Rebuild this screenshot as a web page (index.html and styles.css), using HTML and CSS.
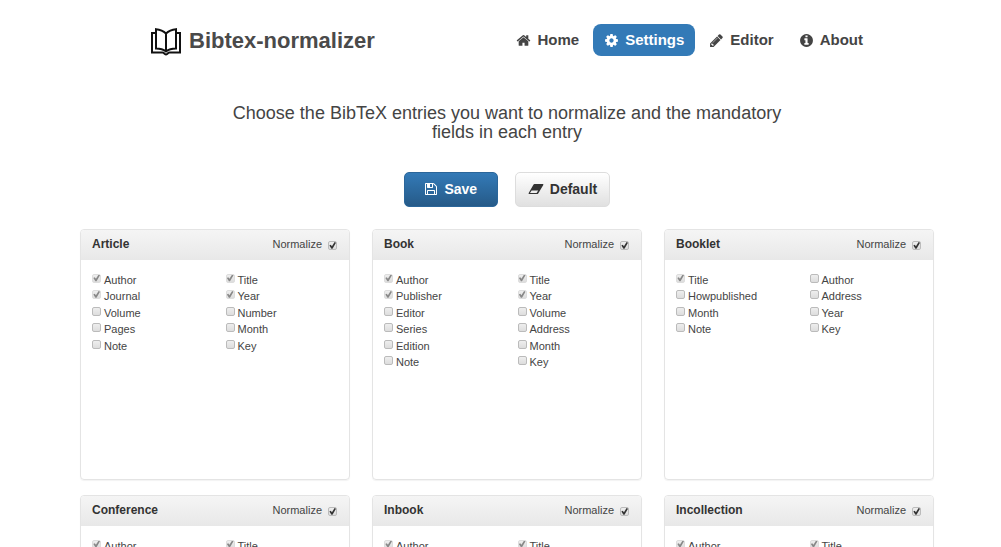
FILE: index.html
```
<!DOCTYPE html>
<html lang="en">
<head>
<meta charset="utf-8">
<title>Bibtex-normalizer</title>
<link rel="stylesheet" href="styles.css">
</head>
<body>
<div class="page">
<header class="header">
  <a class="brand" href="#">
    <svg class="brand-icon" viewBox="0 0 30 28" aria-hidden="true"><path d="M4.500 5H1v19.500h10.500c1.500 0 2.500 2 3.500 2s2-2 3.500-2H29V5h-3.500M15 5.500C12.500 3 8.500 1.500 5 1.200v19.300c4 0 7.500 1 10 3 2.500-2 6-3 10-3V1.200c-3.500.3-7.500 1.800-10 4.300zV23.500"/></svg>
    <span>Bibtex-normalizer</span>
  </a>
  <nav class="nav">
    <a class="nav-link" href="#"><svg class="icon" viewBox="0 0 1792 1792" aria-hidden="true"><path d="M1472 992v480q0 26-19 45t-45 19h-384v-384h-256v384h-384q-26 0-45-19t-19-45v-480q0-1 .5-3t.5-3l575-474 575 474q1 2 1 6zm223-69l-62 74q-8 9-21 11h-3q-13 0-21-7l-692-577-692 577q-12 8-24 7-13-2-21-11l-62-74q-8-10-7-23.500t11-21.500l719-599q32-26 76-26t76 26l244 204v-195q0-14 9-23t23-9h192q14 0 23 9t9 23v408l219 182q10 8 11 21.500t-7 23.500z"/></svg>Home</a>
    <a class="nav-link active" href="#"><svg class="icon" viewBox="0 0 1792 1792" aria-hidden="true"><path d="M1152 896q0-106-75-181t-181-75-181 75-75 181 75 181 181 75 181-75 75-181zm512-109v222q0 12-8 23t-20 13l-185 28q-19 54-39 91 35 50 107 138 10 12 10 25t-9 23q-27 37-99 108t-94 71q-12 0-26-9l-138-108q-44 23-91 38-16 136-29 186-7 28-36 28h-222q-14 0-24.500-8.500t-11.500-21.500l-28-184q-49-16-90-37l-141 107q-10 9-25 9-14 0-25-11-126-114-165-168-7-10-7-23 0-12 8-23 15-21 51-66.500t54-70.500q-27-50-41-99l-183-27q-13-2-21-12.500t-8-23.500v-222q0-12 8-23t19-13l186-28q14-46 39-92-40-57-107-138-10-12-10-24 0-10 9-23 26-36 98.500-107.500t94.500-71.500q13 0 26 10l138 107q44-23 91-38 16-136 29-186 7-28 36-28h222q14 0 24.500 8.500t11.500 21.500l28 184q49 16 90 37l142-107q9-9 24-9 13 0 25 10 129 119 165 170 7 8 7 22 0 12-8 23-15 21-51 66.500t-54 70.500q26 50 41 98l183 28q13 2 21 12.500t8 23.500z"/></svg>Settings</a>
    <a class="nav-link" href="#"><svg class="icon" viewBox="0 0 1792 1792" aria-hidden="true"><path d="M491 1536l91-91-235-235-91 91v107h128v128h107zm523-928q0-22-22-22-10 0-17 7l-542 542q-7 7-7 17 0 22 22 22 10 0 17-7l542-542q7-7 7-17zm-54-192l416 416-832 832h-416v-416zm683 96q0 53-37 90l-166 166-416-416 166-165q36-38 90-38 53 0 91 38l235 234q37 39 37 91z"/></svg>Editor</a>
    <a class="nav-link" href="#"><svg class="icon" viewBox="0 0 1792 1792" aria-hidden="true"><path d="M1152 1376v-160q0-14-9-23t-23-9h-96v-512q0-14-9-23t-23-9h-320q-14 0-23 9t-9 23v160q0 14 9 23t23 9h96v320h-96q-14 0-23 9t-9 23v160q0 14 9 23t23 9h448q14 0 23-9t9-23zm-128-896v-160q0-14-9-23t-23-9h-192q-14 0-23 9t-9 23v160q0 14 9 23t23 9h192q14 0 23-9t9-23zm640 416q0 209-103 385.500t-279.500 279.500-385.500 103-385.500-103-279.500-279.500-103-385.500 103-385.500 279.500-279.500 385.500-103 385.500 103 279.500 279.500 103 385.500z"/></svg>About</a>
  </nav>
</header>
<main>
  <p class="intro">Choose the BibTeX entries you want to normalize and the mandatory fields in each entry</p>
  <div class="actions">
    <button class="btn btn-primary" type="button"><svg class="btn-icon" viewBox="0 0 1792 1792" aria-hidden="true"><path d="M512 1536h768v-384h-768v384zm896 0h128v-896q0-14-10-38.500t-20-34.500l-281-281q-10-10-34-20t-39-10v416q0 40-28 68t-68 28h-576q-40 0-68-28t-28-68v-416h-128v1280h128v-416q0-40 28-68t68-28h832q40 0 68 28t28 68v416zm-384-928v-320q0-13-9.500-22.500t-22.500-9.500h-192q-13 0-22.500 9.500t-9.500 22.500v320q0 13 9.500 22.500t22.500 9.500h192q13 0 22.500-9.500t9.500-22.500zm640 32v928q0 40-28 68t-68 28h-1344q-40 0-68-28t-28-68v-1344q0-40 28-68t68-28h928q40 0 88 20t76 48l280 280q28 28 48 76t20 88z"/></svg>Save</button>
    <button class="btn" type="button"><svg class="btn-icon btn-icon-wide" viewBox="0 0 16 14" aria-hidden="true"><path fill-rule="evenodd" d="M6.500 2h8.300q.9 0 .5 1L10.200 11.400q-.4.600-1.200.600H1.100q-.9 0-.4-1L5.400 2.700q.4-.7 1.100-.7zM3.600 8.400L2 11h6.600l1.600-2.600z"/></svg>Default</button>
  </div>
  <div class="cards">
    <section class="card">
      <div class="card-head"><h2>Article</h2><label>Normalize<input type="checkbox" checked></label></div>
      <div class="fields">
        <label><input type="checkbox" checked disabled>Author</label><label><input type="checkbox" checked disabled>Title</label>
        <label><input type="checkbox" checked disabled>Journal</label><label><input type="checkbox" checked disabled>Year</label>
        <label><input type="checkbox">Volume</label><label><input type="checkbox">Number</label>
        <label><input type="checkbox">Pages</label><label><input type="checkbox">Month</label>
        <label><input type="checkbox">Note</label><label><input type="checkbox">Key</label>
      </div>
    </section>
    <section class="card">
      <div class="card-head"><h2>Book</h2><label>Normalize<input type="checkbox" checked></label></div>
      <div class="fields">
        <label><input type="checkbox" checked disabled>Author</label><label><input type="checkbox" checked disabled>Title</label>
        <label><input type="checkbox" checked disabled>Publisher</label><label><input type="checkbox" checked disabled>Year</label>
        <label><input type="checkbox">Editor</label><label><input type="checkbox">Volume</label>
        <label><input type="checkbox">Series</label><label><input type="checkbox">Address</label>
        <label><input type="checkbox">Edition</label><label><input type="checkbox">Month</label>
        <label><input type="checkbox">Note</label><label><input type="checkbox">Key</label>
      </div>
    </section>
    <section class="card">
      <div class="card-head"><h2>Booklet</h2><label>Normalize<input type="checkbox" checked></label></div>
      <div class="fields">
        <label><input type="checkbox" checked disabled>Title</label><label><input type="checkbox">Author</label>
        <label><input type="checkbox">Howpublished</label><label><input type="checkbox">Address</label>
        <label><input type="checkbox">Month</label><label><input type="checkbox">Year</label>
        <label><input type="checkbox">Note</label><label><input type="checkbox">Key</label>
      </div>
    </section>
    <section class="card">
      <div class="card-head"><h2>Conference</h2><label>Normalize<input type="checkbox" checked></label></div>
      <div class="fields">
        <label><input type="checkbox" checked disabled>Author</label><label><input type="checkbox" checked disabled>Title</label>
      </div>
    </section>
    <section class="card">
      <div class="card-head"><h2>Inbook</h2><label>Normalize<input type="checkbox" checked></label></div>
      <div class="fields">
        <label><input type="checkbox" checked disabled>Author</label><label><input type="checkbox" checked disabled>Title</label>
      </div>
    </section>
    <section class="card">
      <div class="card-head"><h2>Incollection</h2><label>Normalize<input type="checkbox" checked></label></div>
      <div class="fields">
        <label><input type="checkbox" checked disabled>Author</label><label><input type="checkbox" checked disabled>Title</label>
      </div>
    </section>
  </div>
</main>
</div>
</body>
</html>
```
FILE: styles.css
```
* {
  box-sizing: border-box;
}

html {
  scrollbar-width: none;
}

body {
  margin: 0;
  background: #fff;
  color: #444;
  font-family: "Liberation Sans", Arial, sans-serif;
}

.page {
  padding: 24px 67px 24px 80px;
}

.header {
  display: flex;
  align-items: flex-start;
  justify-content: space-between;
  padding: 0 60px 0 71px;
}

.brand {
  display: flex;
  align-items: center;
  gap: 8px;
  color: #4a4a4a;
  font-size: 22px;
  font-weight: bold;
  line-height: 34px;
  text-decoration: none;
}

.brand-icon {
  width: 30px;
  height: 28px;
  margin-top: 2px;
  fill: none;
  stroke: #111;
  stroke-width: 2;
}

.nav {
  display: flex;
  gap: 3px;
}

.nav-link {
  display: flex;
  align-items: center;
  gap: 6px;
  padding: 0 11px;
  border-radius: 8px;
  color: #444;
  font-size: 15px;
  font-weight: bold;
  line-height: 32px;
  text-decoration: none;
}

.nav-link.active {
  background: #337ab7;
  color: #fff;
}

.icon {
  width: 15px;
  height: 15px;
  fill: currentColor;
}

.btn-icon {
  width: 14px;
  height: 14px;
  fill: currentColor;
}

.btn-icon-wide {
  width: 16px;
}

.intro {
  max-width: 560px;
  margin: 46px auto 30px;
  font-size: 18px;
  line-height: 19px;
  text-align: center;
}

.actions {
  display: flex;
  justify-content: center;
  gap: 17px;
  margin-bottom: 22px;
}

.btn {
  display: flex;
  align-items: center;
  justify-content: center;
  gap: 6px;
  min-width: 94px;
  height: 35px;
  padding: 0 12px 2px;
  border: 1px solid #ddd;
  border-radius: 5px;
  background: linear-gradient(#fff, #e0e0e0);
  color: #333;
  font-family: inherit;
  font-size: 14px;
  font-weight: bold;
}

.btn-primary {
  border-color: #2b669a;
  background: linear-gradient(#337ab7, #265a88);
  color: #fff;
}

.cards {
  display: grid;
  grid-template-columns: repeat(3, 1fr);
  gap: 15px 22px;
}

.card {
  min-height: 251px;
  border: 1px solid #e4e4e4;
  border-radius: 4px;
  box-shadow: 0 1px 1px rgba(0, 0, 0, 0.05);
}

.card-head {
  display: flex;
  align-items: center;
  justify-content: space-between;
  height: 30px;
  padding: 0 12px 2px 11px;
  border-radius: 3px 3px 0 0;
  background: linear-gradient(#f5f5f5, #e8e8e8);
}

.card-head h2 {
  margin: 0;
  color: #333;
  font-size: 12px;
}

.card-head label {
  display: flex;
  align-items: center;
  gap: 6px;
  font-size: 11px;
}

.fields {
  display: grid;
  grid-template-columns: 1fr 1fr;
  grid-auto-rows: 17px 16px;
  padding: 11px 0 12px 11px;
  column-gap: 10px;
  font-size: 11px;
}

.fields label {
  display: flex;
  align-items: center;
  gap: 3px;
}

input[type="checkbox"] {
  appearance: none;
  display: grid;
  width: 9px;
  height: 9px;
  margin: 0;
  border: 1px solid #bbb;
  border-radius: 2px;
  background: linear-gradient(#eee, #ddd);
}

.card-head input[type="checkbox"] {
  margin-top: 3px;
}

.fields input[type="checkbox"] {
  margin-bottom: 3px;
}

input[type="checkbox"]:disabled {
  border-color: #ddd;
}

input[type="checkbox"]:checked::before {
  content: "";
  background: #333;
  clip-path: polygon(5% 50%, 25% 40%, 42% 60%, 80% 0, 100% 12%, 50% 95%, 35% 95%);
}

input[type="checkbox"]:disabled::before {
  background: #888;
}
```
